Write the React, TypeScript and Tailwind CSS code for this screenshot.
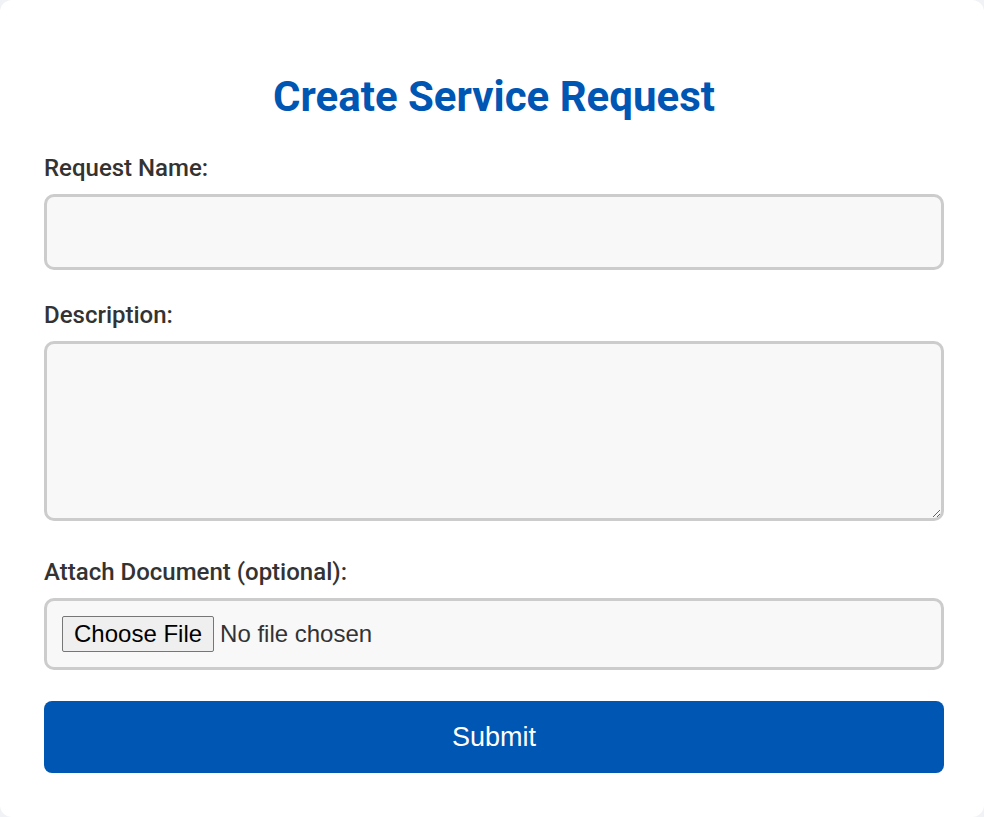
export default function App() {
  return (
    <div className="min-h-screen bg-[#f0f2f5] font-['Roboto',sans-serif]">
      <div className="w-[984px] h-[817px] bg-white rounded-[12px] pl-[44px] pr-[40px] pt-[72px]">
        <h1 className="text-center text-[42px] leading-[50px] font-bold text-[#0056b3]">
          Create Service Request
        </h1>
        <form className="mt-[32px] flex flex-col" onSubmit={(e) => e.preventDefault()}>
          <label className="text-[24px] leading-[28px] font-medium text-[#333]">Request Name:</label>
          <input
            type="text"
            className="mt-[12px] h-[76px] w-full rounded-[10px] border-[3px] border-[#ccc] bg-[#f8f8f8] px-[15px] text-[22px] outline-none"
          />
          <label className="mt-[31px] text-[24px] leading-[28px] font-medium text-[#333]">Description:</label>
          <textarea
            className="mt-[12px] h-[180px] w-full rounded-[10px] border-[3px] border-[#ccc] bg-[#f8f8f8] px-[15px] py-[12px] text-[22px] outline-none"
          />
          <label className="mt-[37px] text-[24px] leading-[28px] font-medium text-[#333]">Attach Document (optional):</label>
          <input
            type="file"
            className="mt-[12px] h-[72px] w-full rounded-[10px] border-[3px] border-[#ccc] bg-[#f8f8f8] px-[15px] pt-[15px] font-['Liberation_Sans',Arial,sans-serif] text-[24px] leading-[36px] text-[#333] file:mr-[6px] file:rounded-[2px] file:border file:border-[#767676] file:bg-[#efefef] file:px-[11px] file:py-0 file:leading-[34px] file:text-[24px] file:text-black file:font-['Liberation_Sans',Arial,sans-serif]"
          />
          <button
            type="submit"
            className="mt-[31px] h-[72px] w-full rounded-[8px] bg-[#0056b3] font-['Liberation_Sans',Arial,sans-serif] text-[27px] text-white"
          >
            Submit
          </button>
        </form>
      </div>
    </div>
  );
}
